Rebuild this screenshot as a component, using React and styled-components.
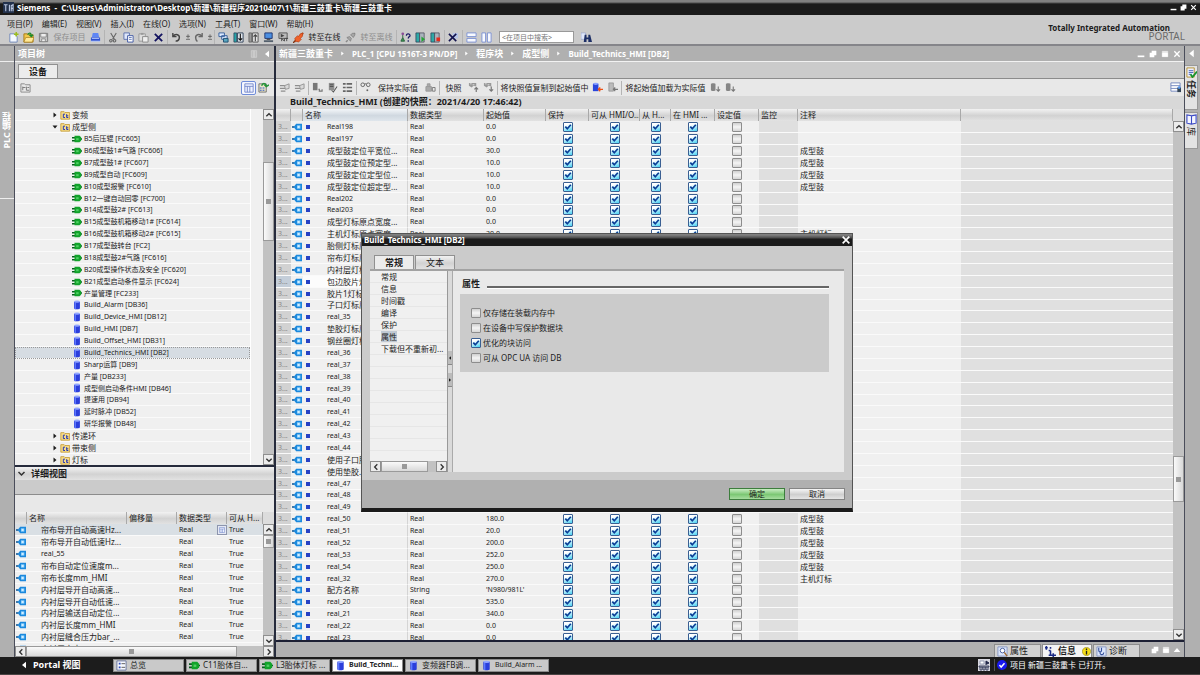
import React from 'react';
import styled, { createGlobalStyle, css } from 'styled-components';

const GlobalStyle = createGlobalStyle`
  * { box-sizing: border-box; }
  body {
    margin: 0;
    overflow: hidden;
    background: #b0b0b0;
    color: #1c1c1c;
    font-family: 'Noto Sans', 'Noto Sans CJK SC', sans-serif;
    font-size: 8px;
    line-height: 12px;
  }
  button, input { font: inherit; color: inherit; margin: 0; padding: 0; }
  svg { display: block; flex: none; }
`;

const tick =
  "url(\"data:image/svg+xml,%3Csvg xmlns='http://www.w3.org/2000/svg' viewBox='0 0 8 8'%3E%3Cpath d='M1.3 3.6l2 2.2L6.8 1.8' fill='none' stroke='%230b3f97' stroke-width='1.7'/%3E%3C/svg%3E\")";

const metal = css`
  background: linear-gradient(#f2f2f2, #d2d2d2 55%, #e2e2e2);
`;

/* ---------- icons ---------- */

const glyphs = {
  tia: (
    <>
      <rect width="12" height="12" fill="#23324d" />
      <path d="M1 3h4M3 3v7M7 3v7M9 10V4l2-1v7M9 7h2" stroke="#b9c6e0" strokeWidth="1.2" fill="none" />
    </>
  ),
  new: (
    <>
      <path d="M2 2h5l3 3v6H2z" fill="#f4f8ff" stroke="#6f86b8" />
      <path d="M9 0v5M6.500 2.500h5" stroke="#9bbd1c" strokeWidth="1.600" />
    </>
  ),
  open: (
    <>
      <path d="M1 2h4l1 1h5v8H1z" fill="#f1c64a" stroke="#a67a16" />
      <path d="M1 11l2-5h9l-2 5z" fill="#ffe897" stroke="#a67a16" strokeWidth=".7" />
      <path d="M5 3c2-3 4-2 4 1M7 3l2 2 2-2" fill="none" stroke="#198c2a" strokeWidth="1.300" />
    </>
  ),
  save: (
    <>
      <path d="M1.500 1.500h9v9h-9z" fill="#c9c9c9" stroke="#777" />
      <path d="M3 1.500h6v4H3zM4 7.500h4v3H4z" fill="#eee" stroke="#777" strokeWidth=".8" />
    </>
  ),
  print: (
    <>
      <path d="M3 1h6l1 5H2z" fill="#5f86f5" />
      <path d="M1 6h10v4H1z" fill="#2d4fd0" />
      <path d="M1 10h10M2 7h8" stroke="#b8cbff" />
    </>
  ),
  cut: (
    <path d="M3 1l4 7M9 1L5 8M4 8.500a1.300 1.300 0 1 0 0 2 1.300 1.300 0 0 0 0-2M8 8.500a1.300 1.300 0 1 0 0 2 1.300 1.300 0 0 0 0-2" fill="none" stroke="#666" strokeWidth="1.200" />
  ),
  copy: (
    <>
      <path d="M1 1h6v7H1z" fill="#dfe7fa" stroke="#5a70ad" />
      <path d="M5 4h6v7H5z" fill="#fff" stroke="#3d56a3" />
      <path d="M6.500 6h3M6.500 8h3" stroke="#3d56a3" strokeWidth=".8" />
    </>
  ),
  paste: (
    <>
      <path d="M1 2h7v8H1z" fill="#ddd" stroke="#999" />
      <path d="M5 5h6v6H5z" fill="#eee" stroke="#888" />
      <path d="M3 1h3v2H3z" fill="#999" />
    </>
  ),
  del: <path d="M2 2l8 8M10 2l-8 8" stroke="#141460" strokeWidth="2" />,
  undo: <path d="M2 1v4h4M2 5c3-4 8-2 7 2-.3 2-2 3-4 3" fill="none" stroke="#444" strokeWidth="1.500" />,
  redo: <path d="M10 1v4H6M10 5C7 1 2 3 3 7c.3 2 1 3 2 3" fill="none" stroke="#666" strokeWidth="1.500" />,
  step: <path d="M3 5h6M6 2v6M3 9.500h6" stroke="#444" strokeWidth="1" fill="none" />,
  compile: (
    <>
      <path d="M1 1h6v4H1zM4 4h6v4H4z" fill="#dce9ff" stroke="#355e9b" />
      <path d="M6 7h5v4H6z" fill="#58a6bf" stroke="#1f4d70" />
    </>
  ),
  download: (
    <>
      <path d="M1 1h3v10H1z" fill="#25a4a8" stroke="#2b3d55" strokeWidth=".8" />
      <path d="M5 1h6v10H5z" fill="#e3e9ef" stroke="#2b3d55" />
      <path d="M8 2v7M6 7l2 2 2-2" fill="none" stroke="#111" strokeWidth="1.200" />
    </>
  ),
  upload: (
    <>
      <path d="M1 1h3v10H1z" fill="#999" stroke="#555" strokeWidth=".8" />
      <path d="M5 1h6v10H5z" fill="#e3e3e3" stroke="#555" />
      <path d="M8 10V3M6 5l2-2 2 2" fill="none" stroke="#444" strokeWidth="1.200" />
    </>
  ),
  sim: (
    <>
      <path d="M2 1h8v6H2z" fill="#4b8fe2" stroke="#20356c" />
      <path d="M1 9h10v2H1z" fill="#54606d" />
      <path d="M4 8h4" stroke="#333" />
    </>
  ),
  runtime: (
    <>
      <path d="M1 1h9v6H1z" fill="#bbb" stroke="#555" />
      <path d="M3 2l4 2-4 2z" fill="#444" />
      <path d="M4 10V7l3 3V7M8 7h3M9.500 7v3" stroke="#444" fill="none" />
    </>
  ),
  plug: (
    <>
      <path d="M0 12l4-4M8 4l3-3" stroke="#7d3413" strokeWidth="1.500" />
      <path d="M2 7l3-3 1 1 2-3 3-1-1 4-2 2 1 1-3 3-2-1-1 1z" fill="#f0622a" stroke="#b73c0f" strokeWidth=".8" />
    </>
  ),
  unplug: (
    <>
      <path d="M1 11l2-2M9 3l2-2" stroke="#888" strokeWidth="1.500" />
      <path d="M2 6l4 4 1-3-2-2zM6 3l3 3 2-3-2-2z" fill="#a5a5a5" stroke="#777" strokeWidth=".7" />
    </>
  ),
  access: (
    <>
      <path d="M3 3v3M1 10l2-4 2 4z" fill="#3a9a55" stroke="#28603a" />
      <circle cx="3" cy="2" r="1.500" fill="#8b4d97" />
      <path d="M7 4c0-3 4-2 4 0 0 1-2 1-2 3M9 9v1.500" fill="none" stroke="#1a1a66" strokeWidth="1.400" />
    </>
  ),
  start: (
    <>
      <path d="M1 1h4v10H1z" fill="#2ea9a6" stroke="#2b3d55" strokeWidth=".8" />
      <path d="M5 1h5v10H5z" fill="#aab4bd" stroke="#445" strokeWidth=".8" />
      <path d="M7 5l4 3-4 3z" fill="#25a536" />
    </>
  ),
  stop: (
    <>
      <path d="M1 1h4v10H1z" fill="#2ea9a6" stroke="#2b3d55" strokeWidth=".8" />
      <path d="M5 1h5v10H5z" fill="#aab4bd" stroke="#445" strokeWidth=".8" />
      <path d="M7 6h4v4H7z" fill="#e52c1c" />
    </>
  ),
  cross: (
    <>
      <path d="M5 1h6v6H5z" fill="#b7c5e8" />
      <path d="M1 2l8 8M9 2l-8 8" stroke="#12124e" strokeWidth="1.700" />
    </>
  ),
  hsplit: <path d="M1 1h10v4H1zM1 7h10v4H1z" fill="#f8faff" stroke="#7b90d4" />,
  vsplit: <path d="M1 1h4v10H1zM7 1h4v10H7z" fill="#f8faff" stroke="#7b90d4" />,
  find: (
    <>
      <path d="M0 1h5v7H0z" fill="#dfe7fa" stroke="#8a99c8" strokeWidth=".6" />
      <path d="M4 3h2v3h2V3h2l2 8H8V8H6v3H3z" fill="#1d2f66" />
    </>
  ),
  tree: (
    <>
      <path d="M1 2h4l1 1h5v8H1z" fill="#e8e8e8" stroke="#888" />
      <path d="M3 5v4M3 6h3M7 5v4h3M8 6h2" stroke="#777" fill="none" />
    </>
  ),
  list: <path d="M1 1h10v10H1zM1 4h10M4 4v7M7 4v7" fill="#eef2ff" stroke="#6b80c6" />,
  export: (
    <>
      <path d="M1 2h8v9H1z" fill="#e9e4c9" stroke="#555" strokeWidth=".8" />
      <path d="M2 6h2v1H2zM5 6h2v1H5zM2 8.500h2v1H2zM5 8.500h2v1H5z" fill="#345ec2" />
      <path d="M4 4c1-3 4-3 5 0M7 3l2 2 3-2" fill="none" stroke="#229438" strokeWidth="1.600" />
    </>
  ),
  insert: (
    <>
      <path d="M1 4h6M1 7h7M2 10h5" stroke="#8e8e8e" strokeWidth="1.500" />
      <path d="M6 4l1 4 4-1V2z" fill="#d9d9d9" stroke="#949494" />
    </>
  ),
  dbA: (
    <>
      <path d="M1 1h5v8H1z" fill="#777" />
      <path d="M7 8h1v2h3V8" fill="none" stroke="#777" strokeWidth="1.300" />
    </>
  ),
  dbB: (
    <>
      <path d="M2 1h6v8H2z" fill="#8e8e8e" />
      <path d="M3 3h4M3 5h4M5 9l2 2 4-6" fill="none" stroke="#555" strokeWidth="1.100" />
    </>
  ),
  bars: <path d="M1 2h3M5 2h6M1 6h3M5 6h6M1 10h3M5 10h6" stroke="#666" strokeWidth="1.800" />,
  glasses: <path d="M1 3a2 2 0 0 0 4 0 2 2 0 0 0-4 0M7 3a2 2 0 0 0 4 0 2 2 0 0 0-4 0M5 2h2M7 9h2M8 8v2" fill="none" stroke="#555" strokeWidth=".9" />,
  lock: (
    <>
      <path d="M1 5h6v5H1zM2.500 5V2h3v3" fill="#aaa" stroke="#999" />
      <path d="M8 6h3v4H8z" fill="none" stroke="#777" />
    </>
  ),
  snapUp: (
    <>
      <path d="M1 1h8v4L6 4 4 6 1 4z" fill="#999" />
      <path d="M2 2h2M5 3h2" stroke="#ddd" />
      <path d="M9 11V6M7 8l2-2 2 2" fill="none" stroke="#777" strokeWidth="1.300" />
    </>
  ),
  snapDn: (
    <>
      <path d="M1 1h8v4L6 4 4 6 1 4z" fill="#999" />
      <path d="M2 2h2M5 3h2" stroke="#ddd" />
      <path d="M9 5v5M7 8l2 2 2-2" fill="none" stroke="#777" strokeWidth="1.300" />
    </>
  ),
  dbBlue: (
    <>
      <path d="M1 2h6v8H1z" fill="#2945dc" />
      <ellipse cx="4" cy="2" rx="3" ry="1.200" fill="#89a0ff" />
      <path d="M12 8H7M9 6L7 8l2 2" fill="none" stroke="#ee5216" strokeWidth="1.500" />
    </>
  ),
  dbGrey: (
    <>
      <path d="M2 1h5v9H2z" fill="#bbb" stroke="#888" strokeWidth=".7" />
      <path d="M12 8H7M9 6L7 8l2 2" fill="none" stroke="#777" strokeWidth="1.300" />
    </>
  ),
  dbDown: (
    <>
      <path d="M1 2c0-1 5-1 5 0v7c0 1-5 1-5 0z" fill="#858585" />
      <path d="M9 5v5M7 8l2 2 2-2" fill="none" stroke="#777" strokeWidth="1.200" />
    </>
  ),
  layout: (
    <>
      <path d="M1 1h10v9H1zM1 4h10M1 7h10" fill="#fff" stroke="#7186bd" />
      <path d="M8 6h4v5H8z" fill="#345" />
      <circle cx="10" cy="6" r="1.500" fill="#5494e6" />
    </>
  ),
  folder: (
    <>
      <path d="M1 2h4l1 1h5.500v8H1z" fill="#f7dc86" stroke="#c59b35" />
      <path d="M4 5v4M4 5h2M4 9h2M8 5v4M8 7h2M8 9h2" stroke="#2939b2" strokeWidth="1.200" fill="none" />
    </>
  ),
  fc: (
    <>
      <path d="M0 4.500h4M0 8h4M9 6h3" stroke="#0a5d20" strokeWidth="1.800" />
      <path d="M3 2h6l2 2v4l-2 2H3z" fill="#12a32b" />
      <path d="M5 5h3v2.500H5z" fill="#4fcf63" />
    </>
  ),
  db: (
    <>
      <path d="M2.500 2v8c0 1.500 7 1.500 7 0V2z" fill="#2b3edb" />
      <path d="M4 3v8" stroke="#5d7bff" strokeWidth="1.500" />
      <ellipse cx="6" cy="2" rx="3.500" ry="1.300" fill="#92a6ff" />
    </>
  ),
  tag: (
    <>
      <path d="M0 6h3" stroke="#1b5f9c" strokeWidth="2" />
      <path d="M2 6l3-4h7v8H5z" fill="#1c89dd" />
      <path d="M6 4h4v4H6z" fill="#8fd0fb" />
      <path d="M7 5h2v2H7z" fill="#e2f4ff" />
    </>
  ),
  overview: (
    <>
      <path d="M1 1h10v10H1z" fill="#f6f8ff" stroke="#66749d" />
      <path d="M3 3h2v2H3zM3 7h2v2H3z" fill="#2b49b8" />
      <path d="M6 4h4M6 8h4" stroke="#555" />
    </>
  ),
  lens: (
    <>
      <path d="M1 1h10v10H1z" fill="#dbe5fb" stroke="#8796c2" />
      <circle cx="6" cy="5" r="2.500" fill="#fff" stroke="#445a99" />
      <path d="M8 7l3 4" stroke="#a0672a" strokeWidth="1.500" />
    </>
  ),
  info: <path d="M0 2h3M1.500 0v4M6 1v2M6 5v5M4 10h8M9 8v4M4 5h2" stroke="#1b2b86" strokeWidth="1.700" fill="none" />,
  diag: (
    <>
      <path d="M1 1h10v10H1z" fill="#dbe5fb" stroke="#8796c2" />
      <path d="M3 2v3c0 2 3 2 3 0V2M4.500 6v2c0 2 4 2 4-1" fill="none" stroke="#334f9b" strokeWidth="1.200" />
    </>
  ),
  warn: (
    <>
      <circle cx="6" cy="6" r="5.500" fill="#f5dd19" stroke="#8b7b00" strokeWidth=".7" />
      <path d="M6 2v2M6 5v5" stroke="#222" strokeWidth="1.800" />
    </>
  ),
  ok: (
    <>
      <circle cx="6" cy="6" r="6" fill="#1818f0" />
      <path d="M3 6l2 2.500L9 4" fill="none" stroke="#fff" strokeWidth="1.700" />
    </>
  ),
  net: (
    <>
      <path d="M0 0h12v12H0z" fill="#d8d8e0" />
      <path d="M2 2h4v3H2z" fill="#fff" stroke="#8990a8" strokeWidth=".8" />
      <path d="M1 7h10v1H1zM2 8v3h2V8M5 8v3h2V8M8 8v3h2V8" fill="none" stroke="#22284a" strokeWidth=".8" />
      <path d="M8 6V2l3 2-2 1" fill="#22284a" stroke="#22284a" />
    </>
  ),
  task: (
    <>
      <path d="M1 1h8v10H1z" fill="#e9edff" stroke="#b8902d" />
      <path d="M3 4h5M3 6h5M3 8h3" stroke="#4761b5" />
      <path d="M5 8l2 3 5-6" fill="none" stroke="#16932d" strokeWidth="1.900" />
    </>
  ),
  book: <path d="M6 2L1 1v9l5 1 5-1V1zM6 2v9" fill="#f4f6ff" stroke="#3a49c6" strokeWidth="1.200" />,
  min: <path d="M1 9.500h10" stroke="currentColor" strokeWidth="2.500" />,
  restore: <path d="M4 1h7v7H8v3H1V4h3z" fill="currentColor" />,
  max: <path d="M1 1h10v10H1zM1 3h10" fill="currentColor" stroke="#999" strokeWidth=".6" />,
  close: <path d="M2 2l8 8M10 2l-8 8" stroke="currentColor" strokeWidth="2" />,
  left: <path d="M9 1L3 6l6 5z" fill="currentColor" />,
  right: <path d="M3 1l6 5-6 5z" fill="currentColor" />,
  down: <path d="M1 3l5 6 5-6z" fill="currentColor" />,
  up: <path d="M1 9l5-6 5 6z" fill="currentColor" />,
  chevUp: <path d="M2 8l4-4 4 4" fill="none" stroke="#333" strokeWidth="2" />,
  chevDown: <path d="M2 4l4 4 4-4" fill="none" stroke="#333" strokeWidth="2" />,
  chevLeft: <path d="M8 2L4 6l4 4" fill="none" stroke="#333" strokeWidth="2" />,
  chevRight: <path d="M4 2l4 4-4 4" fill="none" stroke="#333" strokeWidth="2" />,
  pin: <path d="M2 1h8v10H2zM5 1v10M7 1v10" fill="#bbb" stroke="#ddd" strokeWidth=".8" />
};

const Icon = ({ name, size = 11 }) => (
  <svg width={size} height={size} viewBox="0 0 12 12" aria-hidden="true">
    {glyphs[name]}
  </svg>
);

/* ---------- frame ---------- */

const Page = styled.div`
  height: 100vh;
  display: flex;
  flex-direction: column;
`;

const TitleBar = styled.header`
  flex: none;
  display: flex;
  align-items: center;
  gap: 3px;
  height: 15px;
  padding: 0 3px;
  background: linear-gradient(#808080 0 2px, #4a4a4a 3px, #1b1b1b 4px);
  color: #fff;
  font-size: 8px;
  font-weight: bold;
  white-space: pre;
`;

const Grow = styled.span`
  flex: 1;
`;

const WindowButtons = styled.div`
  display: flex;
  align-items: center;
  gap: ${p => p.$gap || 3}px;
  color: #fff;
`;

const IconButton = styled.button`
  display: flex;
  align-items: center;
  justify-content: center;
  flex: none;
  width: ${p => p.$w || 15}px;
  height: 14px;
  border: 0;
  background: none;
`;

const CommandArea = styled.div`
  flex: none;
  display: flex;
  justify-content: space-between;
  height: 31px;
  background: #cbcbcb;
  border-bottom: 2px solid #85858a;
`;

const Menus = styled.nav`
  display: flex;
  gap: 9px;
  height: 15px;
  padding: 2px 0 0 7px;
`;

const MenuItem = styled.button`
  border: 0;
  background: none;
  line-height: 12px;
`;

const Tools = styled.div`
  display: flex;
  align-items: center;
  height: 14px;
  padding-left: 6px;
`;

const Sep = styled.span`
  flex: none;
  width: 1px;
  height: 14px;
  margin: 0 1px;
  background: #b4b4b4;
`;

const ToolLabel = styled.button`
  flex: none;
  width: ${p => p.$w}px;
  border: 0;
  background: none;
  color: ${p => (p.disabled ? '#8d8d8d' : 'inherit')};
  white-space: nowrap;
  line-height: 12px;
`;

const Search = styled.input`
  width: 75px;
  height: 12px;
  margin: 0 5px;
  padding: 0 2px;
  border: 1px solid #999;
  border-radius: 0;
  background: #fff;
  font-size: 7px;
  line-height: 10px;
  &::placeholder { color: #777; opacity: 1; }
`;

const Brand = styled.div`
  padding: 8px 15px 0 0;
  text-align: right;
  line-height: 9px;
`;

const BrandName = styled.div`
  padding-right: 15px;
  font-size: 8px;
  font-weight: bold;
`;

const BrandPortal = styled.div`
  color: #6b6b6b;
  font-size: 10px;
`;

const Work = styled.div`
  flex: 1;
  min-height: 0;
  display: flex;
`;

const LeftStrip = styled.aside`
  flex: none;
  width: 15px;
  background: #b0b0b0;
  border-right: 1px solid #4a4d5a;
`;

const StripTab = styled.div`
  display: flex;
  align-items: center;
  justify-content: center;
  height: 138px;
  margin-top: 15px;
  border-top: 1px solid #eee;
  border-bottom: 1px solid #eee;
  color: #fff;
  font-size: 9px;
  font-weight: bold;
  span { writing-mode: vertical-rl; transform: rotate(180deg); }
`;

const RightStrip = styled.aside`
  flex: none;
  width: 16px;
  padding-right: 2px;
  background: #b0b0b0;
  border-left: 1px solid #4a4d5a;
  color: #fff;
`;

const SideTab = styled.button`
  display: flex;
  flex-direction: column;
  align-items: center;
  gap: 2px;
  width: 13px;
  height: ${p => p.$h}px;
  margin-bottom: 2px;
  padding-top: 1px;
  border: 1px solid #999;
  border-left: 0;
  background: #e3e3e3;
  color: #222;
  font-size: 9px;
  font-weight: ${p => (p.$active ? 'bold' : 'normal')};
  span { writing-mode: vertical-rl; text-orientation: sideways; }
`;

const StripHead = styled.div`
  display: flex;
  align-items: center;
  justify-content: center;
  height: 19px;
  padding-bottom: 4px;
`;

/* ---------- panels ---------- */

const Panel = styled.section`
  flex: none;
  display: flex;
  flex-direction: column;
  width: 261px;
  background: #cbcbcb;
  border-right: 2px solid #262b3c;
`;

const Editor = styled(Panel)`
  flex: 1;
  min-width: 0;
  width: auto;
  border-right: 0;
`;

const PanelHead = styled.div`
  flex: none;
  display: flex;
  align-items: center;
  gap: ${p => p.$gap || 5}px;
  height: 16px;
  padding: 0 3px;
  background: #b0b0b0;
  border-bottom: 1px solid #f2f2f2;
  color: #fff;
  font-size: 9px;
  font-weight: bold;
`;

const Crumb = styled.span`
  font-size: ${p => (p.$latin ? 8 : 9)}px;
  white-space: nowrap;
`;

const TabBar = styled.div`
  flex: none;
  display: flex;
  align-items: flex-end;
  height: 17px;
  padding-left: 3px;
  border-bottom: 1px solid #8c8c8c;
`;

const Tab = styled.button`
  width: 40px;
  height: 14px;
  border: 1px solid #909090;
  border-bottom: 0;
  ${p => (p.$active ? 'background: #ececec; font-weight: bold;' : metal)}
  font-size: 9px;
  line-height: 12px;
`;

const ToolRow = styled.div`
  flex: none;
  display: flex;
  align-items: center;
  height: 17px;
  padding: 0 ${p => p.$pad || 1}px;
  background: #e8e8e8;
`;

const Toggle = styled(IconButton)`
  border: 1px solid #6f8cd8;
  border-radius: 2px;
  background: #f5f7ff;
`;

const Band = styled.div`
  flex: none;
  height: ${p => p.$h}px;
  background: ${p => p.$bg};
  ${p => p.$line && 'border-bottom: 1px solid #8c8c8c;'}
`;

const TreeWrap = styled.div`
  flex: 1;
  min-height: 0;
  display: flex;
  border-bottom: 2px solid #262b3c;
`;

const Tree = styled.ul`
  flex: 1;
  min-width: 0;
  margin: 0;
  padding: 0;
  overflow: hidden;
  list-style: none;
  background: #f0f0f0;
`;

const TreeRow = styled.li`
  display: flex;
  align-items: center;
  gap: 2px;
  height: 12px;
  padding-left: ${p => (p.$leaf ? 57 : 37)}px;
  border-bottom: 1px solid #fafafa;
  background: ${p => (p.$selected ? '#d6dce2' : 'transparent')};
  outline: ${p => (p.$selected ? '1px dotted #999' : 'none')};
  outline-offset: -1px;
  font-size: ${p => (p.$leaf ? 7 : 8)}px;
  line-height: 11px;
  white-space: nowrap;
  &:nth-child(8n) { height: 11px; }
`;

const TreeEdge = styled.span`
  flex: none;
  width: 13px;
  background: #f0f0f0;
  border-left: 1px solid #fff;
`;

const Bar = styled.div`
  flex: none;
  display: flex;
  flex-direction: ${p => (p.$row ? 'row' : 'column')};
  ${p => (p.$row ? 'height: 11px;' : 'width: 11px;')}
  background: #c2c2c2;
`;

const BarButton = styled.button`
  flex: none;
  display: flex;
  align-items: center;
  justify-content: center;
  width: 11px;
  height: 11px;
  border: 1px solid #8f8f8f;
  background: #ececec;
`;

const Gap = styled.span`
  flex: ${p => p.$n} 1 0;
`;

const Thumb = styled.span`
  flex: ${p => p.$n} 1 0;
  display: flex;
  align-items: center;
  justify-content: center;
  border: 1px solid #9a9a9a;
  background: linear-gradient(${p => (p.$row ? '180deg' : '90deg')}, #fafafa, #d8d8d8);
  &::after { content: ''; width: 5px; height: 5px; background: #999; }
`;

const ScrollBar = ({ row, before, size, after }) => (
  <Bar $row={row}>
    <BarButton aria-label={row ? '向左' : '向上'}><Icon name={row ? 'chevLeft' : 'chevUp'} size={8} /></BarButton>
    {before > 0 && <Gap $n={before} />}
    <Thumb $n={size} $row={row} />
    {after > 0 && <Gap $n={after} />}
    <BarButton aria-label={row ? '向右' : '向下'}><Icon name={row ? 'chevRight' : 'chevDown'} size={8} /></BarButton>
  </Bar>
);

const DetailHead = styled.div`
  flex: none;
  display: flex;
  align-items: center;
  gap: 5px;
  height: 13px;
  padding-left: 2px;
  ${metal}
  font-size: 9px;
  font-weight: bold;
`;

/* ---------- tables ---------- */

const TableWrap = styled.div`
  flex: ${p => (p.$h ? 'none' : 1)};
  ${p => p.$h && `height: ${p.$h}px;`}
  min-height: 0;
  display: flex;
`;

const TableClip = styled.div`
  flex: 1;
  min-width: 0;
  overflow: hidden;
`;

const Table = styled.table`
  width: 100%;
  table-layout: fixed;
  border-spacing: 0;
  th {
    height: 12px;
    padding: 0 2px;
    overflow: hidden;
    ${metal}
    border-right: 1px solid #a9a9a9;
    font-weight: normal;
    line-height: 12px;
    text-align: left;
    white-space: nowrap;
  }
  td {
    height: 12px;
    padding: 0 2px;
    overflow: hidden;
    background: #f0f0f0;
    border-bottom: 1px solid #fafafa;
    line-height: 10px;
    white-space: nowrap;
  }
  tbody tr:nth-child(8n) td { height: 11px; }
`;

const HeadCell = styled.th`
  && { ${p => p.$sorted && 'background: linear-gradient(#f3f6f9, #d0d8e0 55%, #dfe6ec);'} }
`;

const ScrollTop = styled.div`
  display: flex;
  flex-direction: column;
  background: #dcdcdc;
  padding-top: 12px;
  > div { flex: 1; }
`;

const Cell = styled.td`
  && {
    font-size: ${p => (p.$han ? 8 : 7)}px;
    ${p => p.$bg && `background: ${p.$bg};`}
    ${p => p.$left && `padding-left: ${p.$left}px;`}
    ${p => p.$flush && 'padding-right: 0;'}
    ${p => p.$dim && 'color: #888;'}
    ${p => p.$line && 'border-right: 1px solid #d4d4d4;'}
  }
`;

const NameCell = styled.div`
  display: flex;
  align-items: center;
  gap: 17px;
  height: 10px;
`;

const TypeCell = styled.div`
  display: flex;
  align-items: center;
  justify-content: space-between;
  height: 10px;
`;

const PickButton = styled.button`
  display: flex;
  align-items: center;
  justify-content: center;
  width: 10px;
  height: 10px;
  border: 1px solid #8d95ad;
  background: #e4e8f4;
`;

const Dot = styled.span`
  flex: none;
  width: 4px;
  height: 4px;
  background: #2742c4;
`;

const Check = styled.input.attrs({ type: 'checkbox' })`
  appearance: none;
  display: block;
  flex: none;
  width: 10px;
  height: 10px;
  margin: 0 auto;
  border: 1px solid #8d8d8d;
  border-radius: 1px;
  background: linear-gradient(#cfcfcf, #f5f5f5 50%, #d5d5d5);
  &:checked {
    border-color: #3a5f92;
    background: ${tick} center / 8px 8px no-repeat, linear-gradient(160deg, #fff 25%, #45d0f3);
  }
`;

const EditorTitle = styled.div`
  flex: none;
  height: 13px;
  padding-left: 14px;
  background: #d8d8d8;
  font-size: 9px;
  font-weight: bold;
  line-height: 12px;
`;

const Inspector = styled.div`
  flex: none;
  display: flex;
  align-items: flex-end;
  justify-content: flex-end;
  gap: 1px;
  height: 17px;
  padding-right: 3px;
  background: #b0b0b0;
  border-top: 2px solid #1c1f33;
`;

const InspectorTab = styled.button`
  display: flex;
  align-items: center;
  gap: 2px;
  width: ${p => p.$w}px;
  height: 13px;
  padding-left: 2px;
  border: 1px solid #8d8d8d;
  border-bottom: 0;
  background: ${p => (p.$active ? '#f4f4f4' : '#d2d2d2')};
  font-size: 9px;
  font-weight: ${p => (p.$active ? 'bold' : 'normal')};
`;

const InspectorButtons = styled(WindowButtons)`
  height: 14px;
  padding-left: 10px;
`;

/* ---------- task bar ---------- */

const TaskBar = styled.footer`
  flex: none;
  display: flex;
  align-items: center;
  gap: 2px;
  height: 18px;
  padding-bottom: 1px;
  background: #1c1c1c;
  border-bottom: 1px solid #4a4444;
  color: #fff;
`;

const PortalLink = styled.a`
  display: flex;
  align-items: center;
  gap: 5px;
  width: 111px;
  padding-left: 20px;
  color: #fff;
  font-size: 9px;
  font-weight: bold;
  text-decoration: none;
`;

const TaskButton = styled.button`
  display: flex;
  align-items: center;
  gap: 3px;
  flex: none;
  width: 71px;
  height: 13px;
  padding-left: 2px;
  border: 1px solid #8b8b8b;
  background: ${p => (p.$active ? '#fff' : '#c9c9c9')};
  color: #222;
  white-space: nowrap;
  font-size: ${p => (p.$latin ? 7 : 8)}px;
  font-weight: ${p => (p.$active ? 'bold' : 'normal')};
`;

const Status = styled.div`
  display: flex;
  align-items: center;
  gap: 3px;
  width: 206px;
  margin-left: 2px;
  padding-left: 2px;
  border-left: 1px solid #555;
`;

/* ---------- dialog ---------- */

const Dialog = styled.div`
  position: absolute;
  top: 233px;
  left: 361px;
  display: flex;
  flex-direction: column;
  width: 492px;
  height: 279px;
  background: #cbcbcb;
  border: 1px solid #555;
  border-bottom: 4px solid #1b1b1b;
`;

const DialogTitle = styled.div`
  flex: none;
  display: flex;
  align-items: center;
  justify-content: space-between;
  height: 12px;
  padding: 0 0 0 2px;
  background: linear-gradient(#808080 0 1px, #4a4a4a 4px, #1b1b1b 5px);
  color: #fff;
  font-weight: bold;
`;

const DialogTabs = styled.div`
  flex: none;
  display: flex;
  align-items: flex-end;
  gap: 1px;
  height: 25px;
  margin: 0 8px;
  padding-left: 4px;
  border-bottom: 2px solid #a2a2a2;
`;

const DialogBody = styled.div`
  flex: 1;
  min-height: 0;
  display: flex;
  margin: 0 8px;
`;

const Sections = styled.div`
  display: flex;
  flex-direction: column;
  width: 77px;
`;

const SectionList = styled.ul`
  flex: 1;
  margin: 0;
  padding: 0;
  list-style: none;
  background: repeating-linear-gradient(#f0f0f0 0 11px, #e6e6e6 11px 12px);
  li { height: 12px; padding-left: 11px; line-height: 12px; white-space: nowrap; }
`;

const Chosen = styled.span`
  background: #c0c9d3;
`;

const Splitter = styled.div`
  display: flex;
  flex-direction: column;
  gap: 8px;
  width: 6px;
  padding-top: 80px;
  background: #dadada;
  border-left: 1px solid #999;
  border-right: 1px solid #aaa;
  span { display: flex; align-items: center; height: 14px; background: #bcbcbc; border-bottom: 1px solid #888; }
`;

const Content = styled.div`
  flex: 1;
  padding: 6px 15px 0 7px;
  background: #e9e9e9;
`;

const Legend = styled.div`
  display: flex;
  align-items: center;
  gap: 7px;
  height: 13px;
  padding-left: 2px;
  font-size: 9px;
  font-weight: bold;
  &::after { content: ''; flex: 1; height: 2px; margin-top: 8px; background: #666; border-bottom: 1px solid #fff; }
`;

const Options = styled.div`
  display: flex;
  flex-direction: column;
  gap: 3px;
  margin-top: 4px;
  padding: 13px 11px 8px;
  background: #cbcbcb;
`;

const Option = styled.label`
  display: flex;
  align-items: center;
  gap: 2px;
  height: 12px;
  input { margin: 0; }
`;

const DialogFoot = styled.div`
  flex: none;
  display: flex;
  justify-content: flex-end;
  gap: 4px;
  height: 28px;
  margin-top: 8px;
  padding: 8px 7px 0 0;
  background: #b0b0b0;
`;

const PushButton = styled.button`
  width: 56px;
  height: 12px;
  border: 1px solid ${p => (p.$primary ? '#3d7d3d' : '#858585')};
  background: ${p => (p.$primary ? 'linear-gradient(#c9ecc3, #7cc874 55%, #a7dd9f)' : 'linear-gradient(#f6f6f6, #cfcfcf 55%, #e5e5e5)')};
  line-height: 10px;
`;

const WhiteMark = styled.span`
  color: #fff;
`;

/* ---------- data ---------- */

const isHan = s => /[\u4e00-\u9fff]/.test(s);

const menus = ['项目(P)', '编辑(E)', '视图(V)', '插入(I)', '在线(O)', '选项(N)', '工具(T)', '窗口(W)', '帮助(H)'];

const tree = [
  ['closed', '变频'],
  ['open', '成型侧'],
  ['fc', 'B5后压辊 [FC605]'],
  ['fc', 'B6成型鼓1#气路 [FC606]'],
  ['fc', 'B7成型鼓1# [FC607]'],
  ['fc', 'B9成型自动 [FC609]'],
  ['fc', 'B10成型报警 [FC610]'],
  ['fc', 'B12一键自动回零 [FC700]'],
  ['fc', 'B14成型鼓2# [FC613]'],
  ['fc', 'B15成型鼓机箱移动1# [FC614]'],
  ['fc', 'B16成型鼓机箱移动2# [FC615]'],
  ['fc', 'B17成型鼓转台 [FC2]'],
  ['fc', 'B18成型鼓2#气路 [FC616]'],
  ['fc', 'B20成型操作状态及安全 [FC620]'],
  ['fc', 'B21成型启动条件显示 [FC624]'],
  ['fc', '产量管理 [FC233]'],
  ['db', 'Build_Alarm [DB36]'],
  ['db', 'Build_Device_HMI [DB12]'],
  ['db', 'Build_HMI [DB7]'],
  ['db', 'Build_Offset_HMI [DB31]'],
  ['db', 'Build_Technics_HMI [DB2]', true],
  ['db', 'Sharp运算 [DB9]'],
  ['db', '产量 [DB233]'],
  ['db', '成型侧启动条件HMI [DB46]'],
  ['db', '提速用 [DB94]'],
  ['db', '延时脉冲 [DB52]'],
  ['db', '研华报警 [DB48]'],
  ['closed', '传递环'],
  ['closed', '带束侧'],
  ['closed', '灯标']
];

const details = [
  '帘布导开自动高速Hz...', '帘布导开自动低速Hz...', 'real_55', '帘布自动定位速度m...', '帘布长度mm_HMI',
  '内衬层导开自动高速...', '内衬层导开自动低速...', '内衬层输送自动定位...', '内衬层长度mm_HMI', '内衬层缝合压力bar_...', '内衬层定中...'
];

const headers = ['', '', '名称', '数据类型', '起始值', '保持', '可从 HMI/O...', '从 H...', '在 HMI ...', '设定值', '监控', '注释', ''];
const widths = [15, 12, 105, 76, 62, 43, 51, 31, 44, 44, 39, 163];

// name, start value, comment
const tags = [
  ['Real198', '0.0'],
  ['Real197', '0.0'],
  ['成型鼓定位平宽位...', '30.0', '成型鼓'],
  ['成型鼓定位预定型...', '10.0', '成型鼓'],
  ['成型鼓定位定型位...', '10.0', '成型鼓'],
  ['成型鼓定位超定型...', '10.0', '成型鼓'],
  ['Real202', '0.0'],
  ['Real203', '0.0'],
  ['成型灯标原点宽度...', '0.0'],
  ['主机灯标原点宽度...', '30.0', '主机灯标'],
  ['胎侧灯标原点...', '0.0'],
  ['帘布灯标原点...', '0.0'],
  ['内衬层灯标...', '0.0'],
  ['包边胶片灯标...', '0.0'],
  ['胶片1灯标...', '0.0'],
  ['子口灯标原点...', '0.0'],
  ['real_35', '0.0'],
  ['垫胶灯标原点...', '0.0'],
  ['钢丝圈灯标...', '0.0'],
  ...[36, 37, 38, 39, 40, 41, 42, 43, 44].map(n => [`real_${n}`, '0.0']),
  ['使用子口胶...', '0.0'],
  ['使用垫胶...', '0.0'],
  ['real_47', '0.0'],
  ['real_48', '0.0'],
  ['real_49', '0.0'],
  ['real_50', '180.0', '成型鼓'],
  ['real_51', '20.0', '成型鼓'],
  ['real_52', '200.0', '成型鼓'],
  ['real_53', '252.0', '成型鼓'],
  ['real_54', '250.0', '成型鼓'],
  ['real_32', '270.0', '主机灯标'],
  ['配方名称', "'N980/981L'"],
  ['real_20', '535.0'],
  ['real_21', '340.0'],
  ['real_22', '0.0'],
  ['real_23', '0.0']
];

const SELECTED = 13;

/* ---------- parts ---------- */

const IconButtons = ({ names }) =>
  names.map((name, i) => (
    name === '|'
      ? <Sep key={i} />
      : <IconButton key={i} aria-label={name} $w={name === 'step' ? 7 : 15}><Icon name={name} size={name === 'step' ? 8 : 11} /></IconButton>
  ));

const Header = () => (
  <CommandArea>
    <div>
      <Menus>{menus.map(m => <MenuItem key={m}>{m}</MenuItem>)}</Menus>
      <Tools>
        <IconButtons names={['new', 'open', 'save']} />
        <ToolLabel disabled $w={37}>保存项目</ToolLabel>
        <IconButtons names={['print', '|', 'cut', 'copy', 'paste', 'del', '|', 'undo', 'step', 'redo', 'step', '|', 'compile', 'download', 'upload', 'sim', 'runtime', 'plug']} />
        <ToolLabel $w={37}>转至在线</ToolLabel>
        <IconButtons names={['unplug']} />
        <ToolLabel disabled $w={37}>转至离线</ToolLabel>
        <IconButtons names={['|', 'access', 'start', 'stop', '|', 'cross', '|', 'hsplit', 'vsplit']} />
        <Search aria-label="在项目中搜索" placeholder="<在项目中搜索>" />
        <IconButtons names={['find']} />
      </Tools>
    </div>
    <Brand>
      <BrandName>Totally Integrated Automation</BrandName>
      <BrandPortal>PORTAL</BrandPortal>
    </Brand>
  </CommandArea>
);

const ProjectTree = () => (
  <>
    <PanelHead>项目树<Grow /><Icon name="pin" size={8} /><Icon name="left" size={8} /></PanelHead>
    <TabBar><Tab $active>设备</Tab></TabBar>
    <ToolRow $pad={3}>
      <IconButtons names={['tree']} />
      <Grow />
      <Toggle aria-label="列表"><Icon name="list" size={10} /></Toggle>
      <IconButtons names={['export']} />
    </ToolRow>
    <Band $h={13} $bg="#c2c2c2" />
    <TreeWrap>
      <Tree>
        {tree.map(([kind, text, selected]) => {
          const leaf = kind === 'fc' || kind === 'db';
          return (
            <TreeRow key={text} $leaf={leaf} $selected={selected}>
              {!leaf && <Icon name={kind === 'open' ? 'down' : 'right'} size={6} />}
              <Icon name={leaf ? kind : 'folder'} size={10} />
              {text}
            </TreeRow>
          );
        })}
      </Tree>
      <TreeEdge />
      <ScrollBar before={42} size={77} after={214} />
    </TreeWrap>
  </>
);

const DetailView = () => (
  <>
    <DetailHead><Icon name="chevDown" size={9} />详细视图</DetailHead>
    <Band $h={15} $bg="#cbcbcb" $line />
    <Band $h={17} $bg="#e8e8e8" />
    <TableWrap $h={134}>
      <TableClip>
        <Table>
          <colgroup>
            {[12, 100, 50, 50].map((w, i) => <col key={i} width={w} />)}
            <col />
          </colgroup>
          <thead>
            <tr><th /><th>名称</th><th>偏移量</th><th>数据类型</th><th>可从 H...</th></tr>
          </thead>
          <tbody>
            {details.map((name, i) => {
              const bg = i === 0 ? '#d9dfe4' : undefined;
              return (
                <tr key={name}>
                  <Cell $bg={bg} $left={1}><Icon name="tag" size={10} /></Cell>
                  <Cell $bg={bg} $han={isHan(name)} $left={14}>{name}</Cell>
                  <Cell $bg={bg} />
                  <Cell $bg={bg} $flush>
                    <TypeCell>
                      Real
                      {i === 0 && <PickButton aria-label="数据类型"><Icon name="list" size={6} /></PickButton>}
                    </TypeCell>
                  </Cell>
                  <Cell $bg={bg}>True</Cell>
                </tr>
              );
            })}
          </tbody>
        </Table>
      </TableClip>
      <ScrollTop><ScrollBar before={0} size={11} after={88} /></ScrollTop>
    </TableWrap>
    <ScrollBar row before={0} size={200} after={25} />
  </>
);

const TagTable = () => (
  <TableWrap>
    <TableClip>
      <Table>
        <colgroup>
          {widths.map((w, i) => <col key={i} width={w} />)}
          <col />
        </colgroup>
        <thead>
          <tr>{headers.map((h, i) => <HeadCell key={i} $sorted={i === 2}>{h}</HeadCell>)}</tr>
        </thead>
        <tbody>
          {tags.map(([name, value, comment = ''], i) => (
            <tr key={name}>
              <Cell $bg={i === SELECTED ? '#c4ced9' : '#d2d2d2'} $dim $flush>3...</Cell>
              <Cell $left={1}><Icon name="tag" size={10} /></Cell>
              <Cell $han={isHan(name)} $left={3} $line $bg={i === SELECTED ? '#fcfcfc' : undefined}>
                <NameCell><Dot />{name}</NameCell>
              </Cell>
              <Cell>{name === '配方名称' ? 'String' : 'Real'}</Cell>
              <Cell>{value}</Cell>
              {[5, 6, 7, 8, 9].map(c => (
                <Cell key={c}><Check defaultChecked={c < 9} aria-label={`${name} ${headers[c]}`} /></Cell>
              ))}
              <Cell $bg="#dfdfdf" />
              <Cell $han={isHan(comment)}>{comment}</Cell>
              <Cell $bg="#e0e0e0" />
            </tr>
          ))}
        </tbody>
      </Table>
    </TableClip>
    <ScrollTop><ScrollBar before={325} size={44} after={127} /></ScrollTop>
  </TableWrap>
);

const BlockEditor = () => (
  <Editor as="main">
    <PanelHead $gap={7}>
      <Crumb>新疆三鼓重卡</Crumb><Icon name="right" size={5} />
      <Crumb $latin>PLC_1 [CPU 1516T-3 PN/DP]</Crumb><Icon name="right" size={5} />
      <Crumb>程序块</Crumb><Icon name="right" size={5} />
      <Crumb>成型侧</Crumb><Icon name="right" size={5} />
      <Crumb $latin>Build_Technics_HMI [DB2]</Crumb>
      <Grow />
      <WindowButtons $gap={4}>
        {['min', 'restore', 'max', 'close'].map(n => <Icon key={n} name={n} size={8} />)}
      </WindowButtons>
    </PanelHead>
    <TabBar />
    <ToolRow>
      <IconButtons names={['insert', 'insert', '|', 'dbA', 'dbB', 'bars', '|', 'glasses']} />
      <ToolLabel $w={50}>保持实际值</ToolLabel>
      <IconButtons names={['lock', '|']} />
      <ToolLabel $w={25}>快照</ToolLabel>
      <IconButtons names={['snapUp', 'snapDn', '|']} />
      <ToolLabel $w={91}>将快照值复制到起始值中</ToolLabel>
      <IconButtons names={['dbBlue', 'dbGrey', '|']} />
      <ToolLabel $w={85}>将起始值加载为实际值</ToolLabel>
      <IconButtons names={['dbDown', 'dbDown']} />
      <Grow />
      <IconButtons names={['layout']} />
    </ToolRow>
    <EditorTitle>Build_Technics_HMI (创建的快照：2021/4/20 17:46:42)</EditorTitle>
    <TagTable />
    <Inspector>
      <InspectorTab $w={47}><Icon name="lens" />属性</InspectorTab>
      <InspectorTab $w={50} $active><Icon name="info" />信息<Grow /><Icon name="warn" size={9} /></InspectorTab>
      <InspectorTab $w={47}><Icon name="diag" />诊断</InspectorTab>
      <InspectorButtons>
        {['restore', 'max', 'up'].map(n => <Icon key={n} name={n} size={8} />)}
      </InspectorButtons>
    </Inspector>
  </Editor>
);

const sections = ['常规', '信息', '时间戳', '编译', '保护', '属性', '下载但不重新初...'];
const options = ['仅存储在装载内存中', '在设备中写保护数据块', '优化的块访问', '可从 OPC UA 访问 DB'];

const PropertiesDialog = () => (
  <Dialog role="dialog" aria-label="Build_Technics_HMI [DB2]">
    <DialogTitle>
      Build_Technics_HMI [DB2]
      <IconButton $w={12} aria-label="关闭"><WhiteMark><Icon name="close" size={10} /></WhiteMark></IconButton>
    </DialogTitle>
    <DialogTabs><Tab $active>常规</Tab><Tab>文本</Tab></DialogTabs>
    <DialogBody>
      <Sections>
        <SectionList>
          {sections.map(s => <li key={s}>{s === '属性' ? <Chosen>{s}</Chosen> : s}</li>)}
        </SectionList>
        <ScrollBar row before={0} size={47} after={8} />
      </Sections>
      <Splitter>
        <span><Icon name="left" size={4} /></span>
        <span><Icon name="right" size={4} /></span>
      </Splitter>
      <Content>
        <Legend>属性</Legend>
        <Options>
          {options.map((o, i) => <Option key={o}><Check defaultChecked={i === 2} />{o}</Option>)}
        </Options>
      </Content>
    </DialogBody>
    <DialogFoot>
      <PushButton $primary>确定</PushButton>
      <PushButton>取消</PushButton>
    </DialogFoot>
  </Dialog>
);

const tasks = [
  ['overview', '总览'],
  ['fc', 'C11胎体自...'],
  ['fc', 'L3胎体灯标 ...'],
  ['db', 'Build_Techni...', true],
  ['db', '变频器FB调...'],
  ['db', 'Build_Alarm ...']
];

export default function App() {
  return (
    <Page>
      <GlobalStyle />
      <TitleBar>
        <Icon name="tia" />
        {'Siemens  -  C:\\Users\\Administrator\\Desktop\\新疆\\新疆程序20210407\\1\\新疆三鼓重卡\\新疆三鼓重卡'}
        <Grow />
        <WindowButtons>
          {['min', 'restore', 'close'].map(n => <Icon key={n} name={n} size={7} />)}
        </WindowButtons>
      </TitleBar>
      <Header />
      <Work>
        <LeftStrip><StripTab><span>PLC 编程</span></StripTab></LeftStrip>
        <Panel>
          <ProjectTree />
          <DetailView />
        </Panel>
        <BlockEditor />
        <RightStrip>
          <StripHead><Icon name="left" size={9} /></StripHead>
          <SideTab $h={45} $active><Icon name="task" /><span>任务</span></SideTab>
          <SideTab $h={37}><Icon name="book" /><span>库</span></SideTab>
        </RightStrip>
      </Work>
      <TaskBar>
        <PortalLink href="#portal"><Icon name="left" size={8} />Portal 视图</PortalLink>
        {tasks.map(([icon, text, active]) => (
          <TaskButton key={text} $active={active} $latin={!isHan(text)}><Icon name={icon} />{text}</TaskButton>
        ))}
        <Grow />
        <Icon name="net" size={12} />
        <Status><Icon name="ok" size={10} />项目 新疆三鼓重卡 已打开。</Status>
      </TaskBar>
      <PropertiesDialog />
    </Page>
  );
}
